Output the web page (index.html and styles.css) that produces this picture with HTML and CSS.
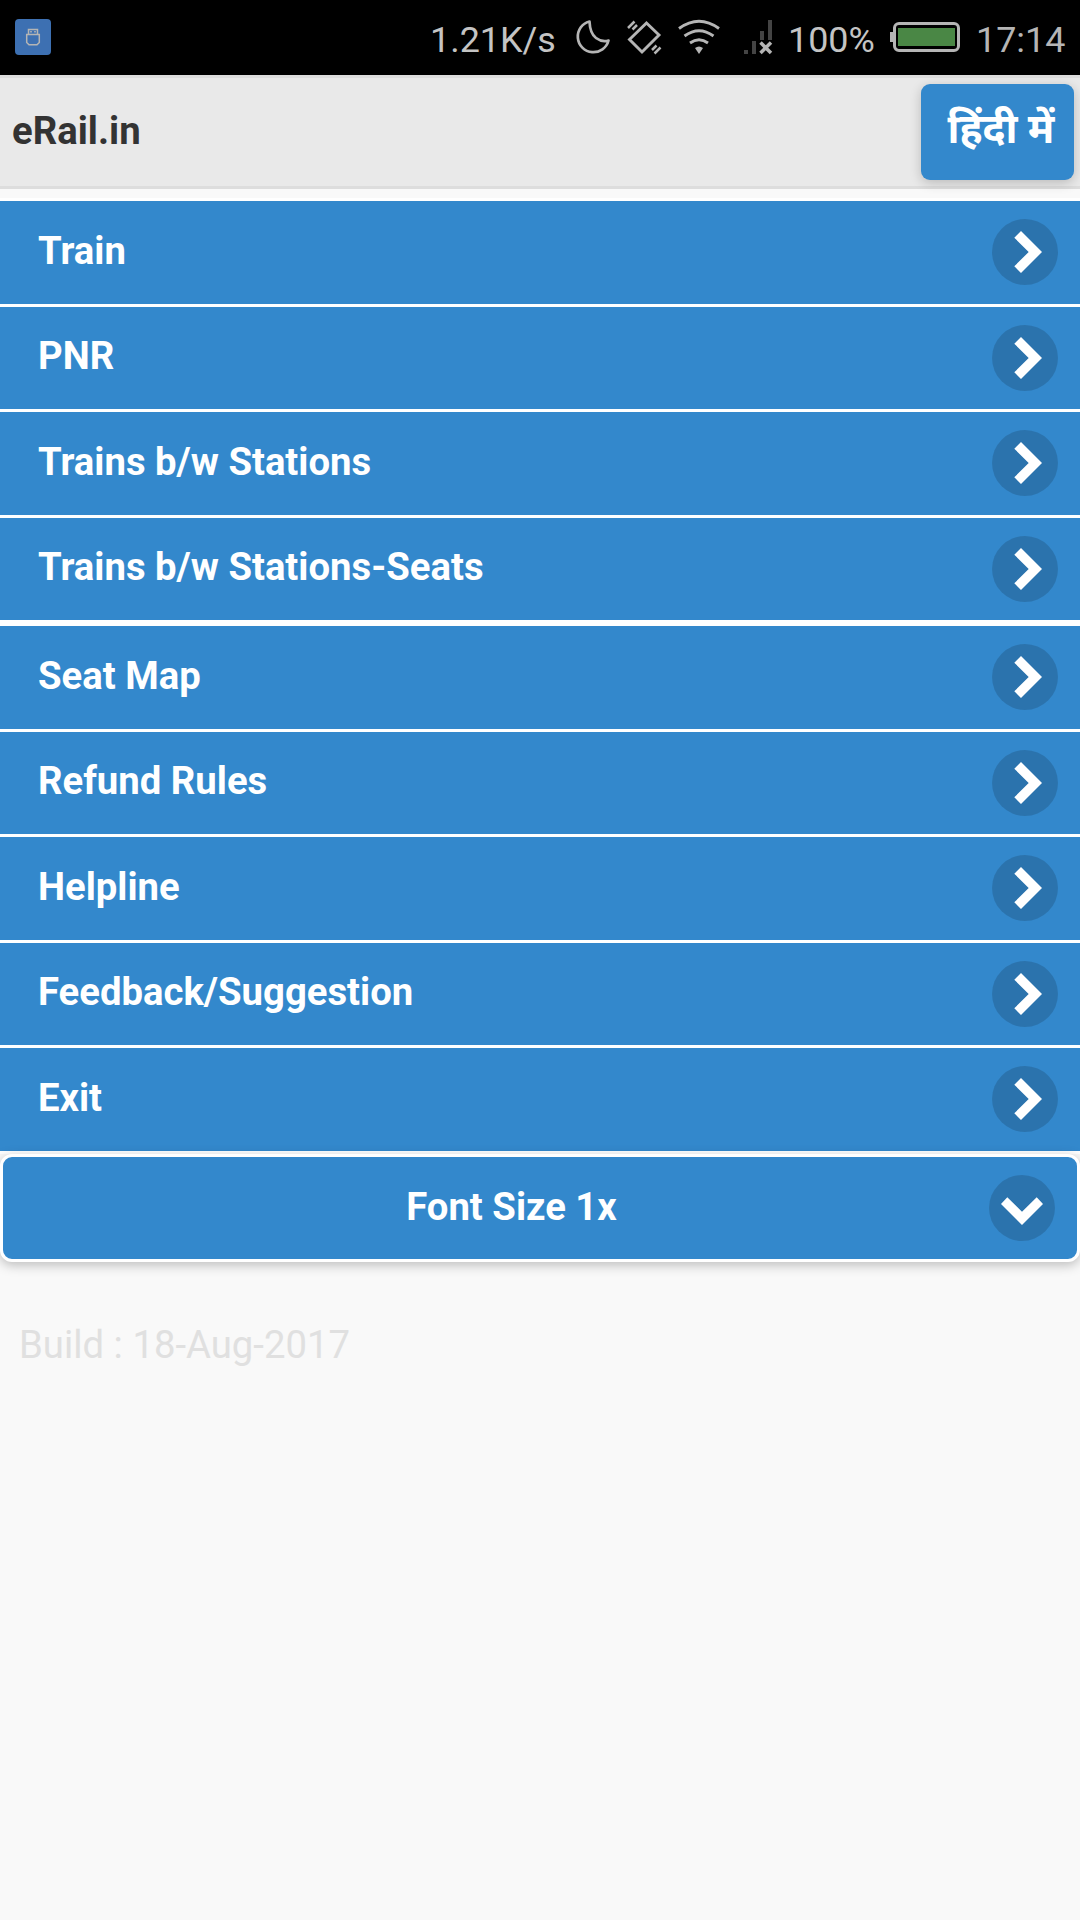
FILE: index.html
```html
<!DOCTYPE html>
<html lang="en">
<head>
<meta charset="utf-8">
<title>eRail.in</title>
<link rel="stylesheet" href="styles.css">
</head>
<body>
<svg width="0" height="0" class="defs">
  <symbol id="carat-r" viewBox="0 0 66 66"><path d="M29 12L22.3 18.7L36.7 33L22.3 47.3L29 54L50 33Z" fill="#fff"/></symbol>
  <symbol id="carat-d" viewBox="0 0 66 66"><path d="M12 29L18.3 22.3L33 36.7L47.7 22.3L54 29L33 50Z" fill="#fff"/></symbol>
</svg>
<div class="status">
  <svg class="usb" width="36" height="36" viewBox="0 0 36 36"><rect width="36" height="36" rx="4" fill="#3d70b2"/><path d="M13.5 15V10.5H22.5V15M11.700 15.500H24.300V23.500L22 25.800H14L11.700 23.500Z" fill="none" stroke="#b5b5b5" stroke-width="1.5"/><path d="M15.200 12h1.600v1.600h-1.600zM19.200 12h1.600v1.600h-1.600z" fill="#b5b5b5"/></svg>
  <span class="speed">1.21K/s</span>
  <svg class="moon" width="36" height="36" viewBox="0 0 36 36"><path d="M14.500 2.500A15.600 15.600 0 1 0 33.500 21.500Q27 23.500 21 19T14.500 2.500Z" fill="none" stroke="#b5b5b5" stroke-width="2.700" stroke-linejoin="round"/></svg>
  <svg class="vibrate" width="36" height="36" viewBox="0 0 36 36"><path d="M20.500 4L33 16L16 33L3.500 20.500Z" fill="none" stroke="#b5b5b5" stroke-width="2.900"/><path d="M2 9L8.500 2.500M6.500 10.500L11 6M26 31L30.500 26.500M28.500 34.500L34.500 28.500" stroke="#b5b5b5" stroke-width="2.500"/></svg>
  <svg class="wifi" width="42" height="36" viewBox="0 0 42 36"><path d="M1 9.500Q21 -5 41 9.500M6.500 17Q21 6.500 35.500 17M12 24Q21 17.500 30 24" fill="none" stroke="#b5b5b5" stroke-width="2.900"/><path d="M17 29Q21 26 25 29L21 35Z" fill="#b5b5b5"/></svg>
  <svg class="signal" width="30" height="36" viewBox="0 0 30 36"><path d="M0 31h4v4H0zM8 22h4v13H8zM16 12h4v9h-4zM24 1h4v20h-4z" fill="#444"/><path d="M16.500 23.500L27 34M27 23.500L16.500 34" stroke="#b5b5b5" stroke-width="3.500"/></svg>
  <span class="percent">100%</span>
  <svg class="battery" width="70" height="30" viewBox="0 0 70 30"><rect x="4.500" y="1.500" width="64" height="27" rx="4.500" fill="none" stroke="#b5b5b5" stroke-width="3"/><path d="M0 10h4v10H0z" fill="#b5b5b5"/><path d="M8 6h57v18H8z" fill="#4a8745"/></svg>
  <span class="clock">17:14</span>
</div>
<header class="header">
  <h1 class="title">eRail.in</h1>
  <a class="lang">हिंदी में</a>
</header>
<main>
  <ul class="list">
    <li class="row"><span>Train</span><svg class="icon"><use href="#carat-r"/></svg></li>
    <li class="row"><span>PNR</span><svg class="icon"><use href="#carat-r"/></svg></li>
    <li class="row"><span>Trains b/w Stations</span><svg class="icon"><use href="#carat-r"/></svg></li>
    <li class="row"><span>Trains b/w Stations-Seats</span><svg class="icon"><use href="#carat-r"/></svg></li>
  </ul>
  <ul class="list">
    <li class="row"><span>Seat Map</span><svg class="icon"><use href="#carat-r"/></svg></li>
    <li class="row"><span>Refund Rules</span><svg class="icon"><use href="#carat-r"/></svg></li>
    <li class="row"><span>Helpline</span><svg class="icon"><use href="#carat-r"/></svg></li>
    <li class="row"><span>Feedback/Suggestion</span><svg class="icon"><use href="#carat-r"/></svg></li>
    <li class="row"><span>Exit</span><svg class="icon"><use href="#carat-r"/></svg></li>
  </ul>
  <div class="select"><span class="select-label">Font Size 1x</span><svg class="icon"><use href="#carat-d"/></svg></div>
  <p class="build">Build : 18-Aug-2017</p>
</main>
</body>
</html>
```
FILE: styles.css
```css
* { box-sizing: border-box; }
body {
  margin: 0;
  height: 1920px;
  overflow: hidden;
  background: #f9f9f9;
  font: 38.28px/50px Roboto, sans-serif;
  color: #333;
}
.defs { position: absolute; }
.status {
  display: flex;
  align-items: flex-start;
  height: 75px;
  background: #000;
  color: #c4c4c4;
  font-size: 35.9px;
  line-height: 43px;
}
.status svg { flex: none; margin-top: 19px; }
.status span { flex: none; margin-top: 19px; white-space: nowrap; }
.status .usb { margin-left: 15px; }
.status .speed { width: 146px; margin-left: 379px; }
.moon { margin-left: -1px; }
.vibrate { margin-left: 15px; }
.wifi { margin-left: 16px; }
.signal { margin-left: 24px; }
.status .percent { width: 101px; margin-left: 14px; }
.status .battery { margin: 22px 0 0 1px; }
.status .clock { margin-left: 16px; color: #b5b5b5; }
.header {
  display: flex;
  justify-content: space-between;
  height: 114px;
  padding: 6px 6px 0 12px;
  border: solid #ddd;
  border-width: 3px 0;
  background: #e9e9e9;
}
.title { margin: 22px 0 0; font-size: 38.28px; font-weight: 700; }
.lang {
  width: 153px;
  height: 96px;
  padding: 20px 0 0 26.5px;
  border-radius: 9px;
  background: #38c;
  color: #fff;
  font-family: Roboto, "Noto Sans Devanagari", "Noto Sans", sans-serif;
  font-size: 40.8px;
  font-weight: 700;
  white-space: nowrap;
  box-shadow: 0 3px 12px rgba(0, 0, 0, .2);
}
main { padding-top: 9px; }
.list {
  margin: 0;
  padding: 0;
  list-style: none;
  border-bottom: 3px solid #fff;
}
.row {
  display: flex;
  justify-content: space-between;
  height: 105.52px;
  padding: 24.7px 22px 0 38px;
  border-top: 3px solid #fff;
  background: #38c;
  color: #fff;
  font-weight: 700;
}
.icon {
  flex: none;
  width: 66px;
  height: 66px;
  margin-top: -6.5px;
  border-radius: 50%;
  background: rgba(0, 0, 0, .15);
}
.select {
  display: flex;
  height: 108px;
  padding: 25.3px 22px 0 38px;
  border: 3px solid #fff;
  border-radius: 12px;
  background: #38c;
  color: #fff;
  font-weight: 700;
  box-shadow: 0 3px 12px rgba(0, 0, 0, .25);
}
.select .icon { margin-top: -7.3px; }
.select-label { flex: 1; text-align: center; padding-right: 7px; }
.build { margin: 58px 0 0 19px; color: #e0e0e0; }
```
